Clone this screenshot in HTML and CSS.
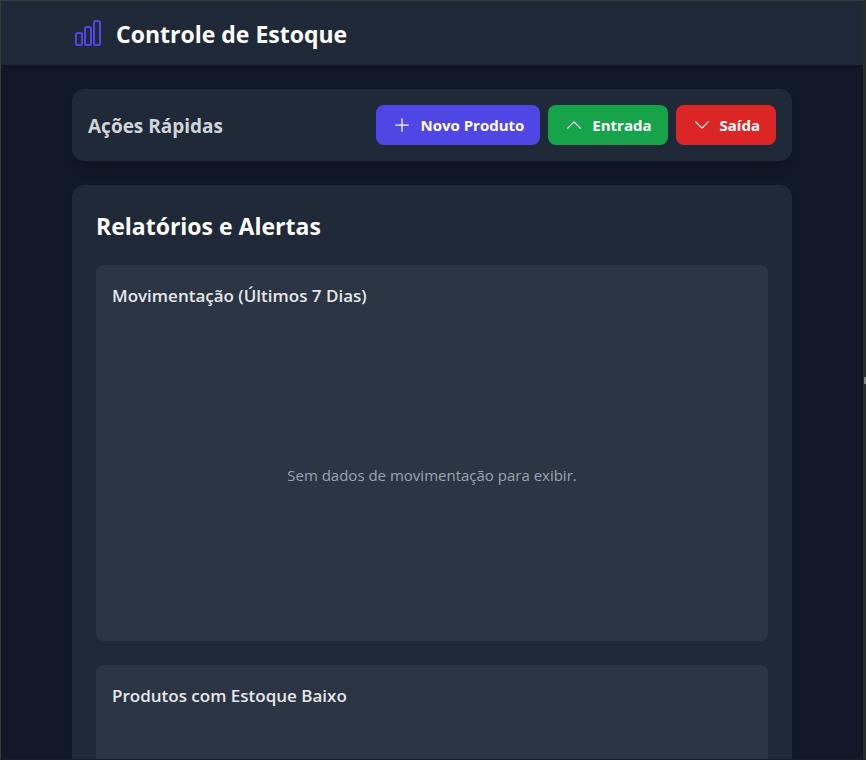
FILE: index.html
```html
<!DOCTYPE html>
<html lang="pt-BR">
<head>
<meta charset="UTF-8">
<meta name="viewport" content="width=device-width, initial-scale=1">
<title>Controle de Estoque</title>
<link rel="stylesheet" href="styles.css">
</head>
<body>
<div class="window">
  <div class="screen">
    <header class="topbar">
      <div class="container brand">
        <svg class="brand-icon" viewBox="0 0 24 24" aria-hidden="true"><path d="M3 13.125C3 12.504 3.504 12 4.125 12h2.25c.621 0 1.125.504 1.125 1.125v6.75C7.5 20.496 6.996 21 6.375 21h-2.25A1.125 1.125 0 0 1 3 19.875v-6.75ZM9.75 8.625c0-.621.504-1.125 1.125-1.125h2.25c.621 0 1.125.504 1.125 1.125v11.25c0 .621-.504 1.125-1.125 1.125h-2.25a1.125 1.125 0 0 1-1.125-1.125V8.625ZM16.5 4.125c0-.621.504-1.125 1.125-1.125h2.25C20.496 3 21 3.504 21 4.125v15.75c0 .621-.504 1.125-1.125 1.125h-2.25a1.125 1.125 0 0 1-1.125-1.125V4.125Z"/></svg>
        <h1 class="brand-title">Controle de Estoque</h1>
      </div>
    </header>
    <main class="container content">
      <section class="card actions">
        <h2 class="actions-title">Ações Rápidas</h2>
        <div class="buttons">
          <button type="button" class="button button-primary">
            <svg class="button-icon" viewBox="0 0 24 24" aria-hidden="true"><path d="M12 4.5v15m7.5-7.5h-15"/></svg>
            Novo Produto
          </button>
          <button type="button" class="button button-in">
            <svg class="button-icon" viewBox="0 0 24 24" aria-hidden="true"><path d="m4.5 15.75 7.5-7.5 7.5 7.5"/></svg>
            Entrada
          </button>
          <button type="button" class="button button-out">
            <svg class="button-icon" viewBox="0 0 24 24" aria-hidden="true"><path d="m19.5 8.25-7.5 7.5-7.5-7.5"/></svg>
            Saída
          </button>
        </div>
      </section>
      <section class="card reports">
        <h2 class="reports-title">Relatórios e Alertas</h2>
        <div class="panels">
          <article class="panel">
            <h3 class="panel-title">Movimentação (Últimos 7 Dias)</h3>
            <div class="chart"><p class="empty">Sem dados de movimentação para exibir.</p></div>
          </article>
          <article class="panel">
            <h3 class="panel-title">Produtos com Estoque Baixo</h3>
            <div class="chart"></div>
          </article>
        </div>
      </section>
    </main>
  </div>
  <span class="grip"></span>
</div>
</body>
</html>
```
FILE: styles.css
```css
* {
  box-sizing: border-box;
  margin: 0;
}

body {
  background: #111827;
  color: #e5e7eb;
  font-family: "Segoe UI", "Open Sans", "Noto Sans", sans-serif;
  font-size: 16px;
  line-height: 24px;
}

.window {
  position: relative;
  height: 100vh;
  border: 1px solid #3a3a3a;
  border-right: 3px solid #2b2b2b;
  border-bottom: 1px solid #1a1d28;
}

.screen {
  height: 100%;
  overflow: auto;
  scrollbar-width: none;
}

.grip {
  position: absolute;
  top: calc(50% - 3px);
  right: -3px;
  width: 2px;
  height: 7px;
  background: #808080;
}

.container {
  max-width: 768px;
  margin: 0 auto;
  padding: 0 24px;
}

.topbar {
  background: #1f2937;
  box-shadow: 0 4px 6px -1px rgb(0 0 0 / 0.1), 0 2px 4px -2px rgb(0 0 0 / 0.1);
}

.brand {
  display: flex;
  align-items: center;
  gap: 12px;
  height: 64px;
}

.brand-icon {
  width: 32px;
  height: 32px;
  fill: none;
  stroke: #4f46e5;
  stroke-width: 1.5;
  stroke-linecap: round;
  stroke-linejoin: round;
}

.brand-title,
.reports-title {
  color: #fff;
  font-size: 23px;
  font-weight: 700;
  line-height: 32px;
}

.brand-title,
.actions-title {
  padding-top: 2px;
}

.content {
  display: grid;
  gap: 24px;
  padding-top: 24px;
  padding-bottom: 24px;
}

.card {
  background: #1f2937;
  border-radius: 12px;
  box-shadow: 0 10px 15px -3px rgb(0 0 0 / 0.1), 0 4px 6px -4px rgb(0 0 0 / 0.1);
}

.actions {
  display: flex;
  flex-wrap: wrap;
  align-items: center;
  justify-content: space-between;
  gap: 16px;
  padding: 16px;
}

.actions-title {
  color: #d1d5db;
  font-size: 19px;
  font-weight: 700;
  line-height: 28px;
}

.buttons {
  display: flex;
  gap: 8px;
}

.button {
  display: flex;
  align-items: center;
  gap: 8px;
  padding: 8px 16px;
  border: 0;
  border-radius: 8px;
  color: #fff;
  font: inherit;
  font-size: 15px;
  font-weight: 700;
  cursor: pointer;
}

.button-primary { background: #4f46e5; }
.button-in { background: #16a34a; }
.button-out { background: #dc2626; }

.button-icon {
  width: 20px;
  height: 20px;
  fill: none;
  stroke: currentColor;
  stroke-width: 1.5;
  stroke-linecap: round;
  stroke-linejoin: round;
}

.reports {
  padding: 24px;
}

.reports-title {
  line-height: 34px;
  margin-bottom: 22px;
}

.panels {
  display: grid;
  gap: 24px;
}

.panel {
  padding: 16px;
  border-radius: 8px;
  background: rgb(55 65 81 / 0.5);
}

.panel-title {
  margin-bottom: 14px;
  font-size: 17px;
  font-weight: 600;
  line-height: 30px;
}

.chart {
  display: flex;
  align-items: center;
  justify-content: center;
  height: 300px;
}

.empty {
  color: #9ca3af;
  font-size: 15px;
}
```
